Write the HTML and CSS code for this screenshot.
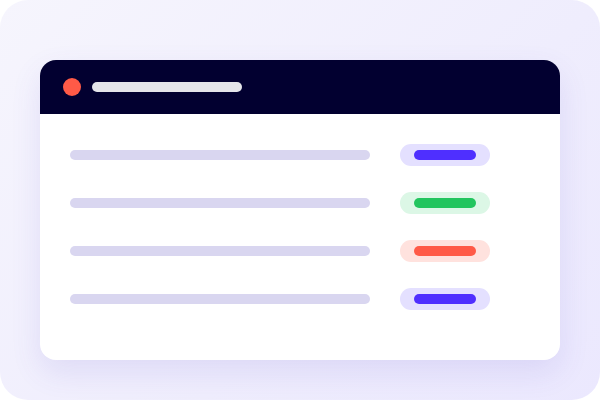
FILE: index.html
```html
<!DOCTYPE html>
<html lang="en">
<head>
    <meta charset="utf-8" />
    <link rel="stylesheet" href="styles.css">
    <title>Status list</title>
</head>
<body>

<div class="frame">
    <div class="card">
        <!-- Window header -->
        <div class="card-header">
            <span class="dot"></span>
            <span class="title-bar"></span>
        </div>

        <!-- List rows -->
        <div class="card-body">
            <div class="row">
                <span class="line"></span>
                <span class="pill pill-blue"><span class="pill-bar"></span></span>
            </div>
            <div class="row">
                <span class="line"></span>
                <span class="pill pill-green"><span class="pill-bar"></span></span>
            </div>
            <div class="row">
                <span class="line"></span>
                <span class="pill pill-red"><span class="pill-bar"></span></span>
            </div>
            <div class="row">
                <span class="line"></span>
                <span class="pill pill-blue"><span class="pill-bar"></span></span>
            </div>
        </div>
    </div>
</div>

</body>
</html>
```

FILE: styles.css
```css
body {
    margin: 0;
    background: #ffffff;
}

.frame {
    width: 600px;
    height: 400px;
    box-sizing: border-box;
    padding: 60px 40px 40px;
    border-radius: 28px;
    background: linear-gradient(135deg, #f6f5fd 0%, #efedfd 60%, #ebe8fe 100%);
    overflow: hidden;
}

.card {
    width: 520px;
    height: 300px;
    background: #ffffff;
    border-radius: 16px;
    overflow: hidden;
    box-shadow: 0 12px 30px rgba(90, 70, 200, 0.12);
}

.card-header {
    height: 54px;
    background: #020030;
    display: flex;
    align-items: center;
    padding-left: 23px;
    gap: 11px;
}

.dot {
    width: 18px;
    height: 18px;
    border-radius: 50%;
    background: #ff5a47;
}

.title-bar {
    width: 150px;
    height: 10px;
    border-radius: 5px;
    background: #e5e5ea;
}

.card-body {
    padding: 30px 30px 0;
    display: flex;
    flex-direction: column;
    gap: 26px;
}

.row {
    display: flex;
    align-items: center;
    gap: 30px;
    height: 22px;
}

.line {
    width: 300px;
    height: 10px;
    border-radius: 5px;
    background: #d9d6f0;
}

.pill {
    width: 90px;
    height: 22px;
    border-radius: 11px;
    display: flex;
    align-items: center;
    justify-content: center;
}

.pill-bar {
    width: 62px;
    height: 10px;
    border-radius: 5px;
}

.pill-blue { background: #e4e0ff; }
.pill-blue .pill-bar { background: #4f2fff; }

.pill-green { background: #dcf7e6; }
.pill-green .pill-bar { background: #22c55e; }

.pill-red { background: #ffe2de; }
.pill-red .pill-bar { background: #ff5a47; }
```
